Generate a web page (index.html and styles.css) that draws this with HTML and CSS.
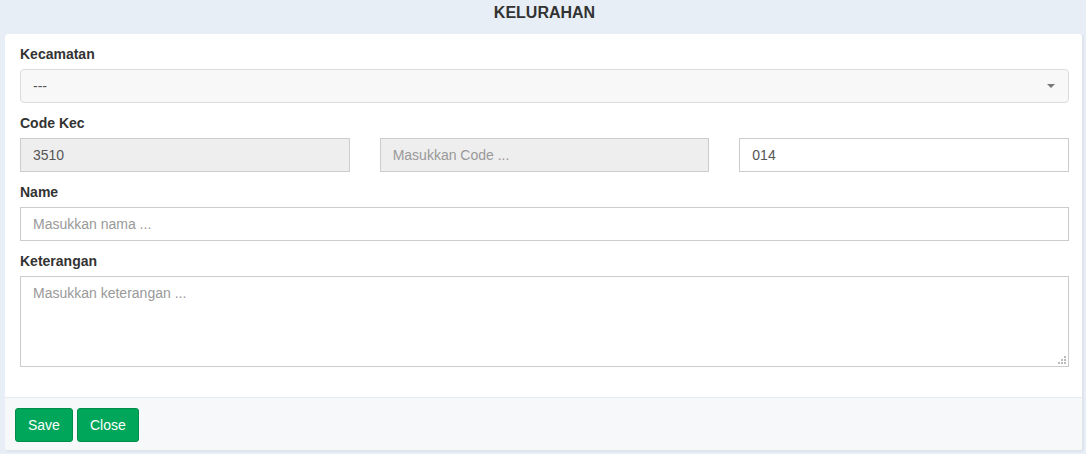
FILE: index.html
```html
<!DOCTYPE html>
<html>
<head>
<meta charset="utf-8">
<link rel="stylesheet" href="styles.css">
</head>
<body>
<div class="page">
  <h1 class="title">KELURAHAN</h1>
  <div class="card">
    <div class="card-body">
      <div class="group">
        <label class="label">Kecamatan</label>
        <div class="select">
          <span class="select-text">---</span>
          <span class="caret"></span>
        </div>
      </div>
      <div class="group">
        <label class="label">Code Kec</label>
        <div class="row3">
          <input class="input" type="text" value="3510" disabled>
          <input class="input" type="text" placeholder="Masukkan Code ..." disabled>
          <input class="input" type="text" value="014">
        </div>
      </div>
      <div class="group">
        <label class="label">Name</label>
        <input class="input" type="text" placeholder="Masukkan nama ...">
      </div>
      <div class="group">
        <label class="label">Keterangan</label>
        <div class="textarea-wrap">
          <textarea class="input textarea" placeholder="Masukkan keterangan ..."></textarea>
          <svg class="grip" width="9" height="9" viewBox="0 0 9 9">
            <rect x="7" y="1" width="2" height="2" fill="#bbb"/>
            <rect x="4" y="4" width="2" height="2" fill="#bbb"/>
            <rect x="7" y="4" width="2" height="2" fill="#bbb"/>
            <rect x="1" y="7" width="2" height="2" fill="#bbb"/>
            <rect x="4" y="7" width="2" height="2" fill="#bbb"/>
            <rect x="7" y="7" width="2" height="2" fill="#bbb"/>
          </svg>
        </div>
      </div>
    </div>
    <div class="card-footer">
      <button class="btn">Save</button>
      <button class="btn">Close</button>
    </div>
  </div>
</div>
</body>
</html>
```

FILE: styles.css
```css
* { box-sizing: border-box; }
html, body {
  margin: 0;
  padding: 0;
  background: #e8eef5;
  font-family: "Liberation Sans", Arial, sans-serif;
  color: #333;
}
.page {
  padding: 0 2px 0 5px;
}
.title {
  margin: 0;
  height: 34px;
  padding-top: 4px;
  font-size: 16px;
  line-height: 18px;
  font-weight: bold;
  text-align: center;
  color: #333;
}
.card {
  background: #fff;
  border-radius: 4px;
  border-right: 2px solid #dfe5ec;
  border-bottom: 2px solid #dfe5ec;
  overflow: hidden;
}
.card-body {
  padding: 11px 13px 30px 15px;
}
.group {
  margin-bottom: 11px;
}
.group:last-child { margin-bottom: 0; }
.label {
  display: block;
  font-size: 14px;
  line-height: 19px;
  font-weight: bold;
  margin-bottom: 5px;
  color: #333;
}
.select {
  display: flex;
  align-items: center;
  justify-content: space-between;
  height: 34px;
  padding: 0 12px;
  border: 1px solid #dcdcdc;
  border-radius: 4px;
  background: #f8f8f8;
  font-size: 14px;
  color: #555;
}
.caret {
  width: 0;
  height: 0;
  border-left: 4px solid transparent;
  border-right: 4px solid transparent;
  border-top: 4px solid #777;
  margin-right: 1px;
}
.row3 {
  display: grid;
  grid-template-columns: 1fr 1fr 1fr;
  column-gap: 30px;
}
.input {
  display: block;
  width: 100%;
  height: 34px;
  padding: 6px 12px;
  border: 1px solid #ccc;
  border-radius: 0;
  background: #fff;
  font-family: "Liberation Sans", Arial, sans-serif;
  font-size: 14px;
  color: #555;
  outline: none;
}
.input:disabled {
  background: #eee;
  color: #555;
  -webkit-text-fill-color: #555;
  opacity: 1;
}
.input::placeholder {
  color: #999;
  -webkit-text-fill-color: #999;
  opacity: 1;
}
.textarea-wrap {
  position: relative;
}
.textarea {
  height: 91px;
  resize: none;
  line-height: 20px;
  padding-top: 6px;
}
.grip {
  position: absolute;
  right: 3px;
  bottom: 3px;
}
.card-footer {
  border-top: 1px solid #e6e9ee;
  background: #f7f8fa;
  padding: 10px 10px 8px;
  display: flex;
  gap: 4px;
}
.btn {
  height: 34px;
  padding: 6px 12px;
  border: 1px solid #008d4c;
  border-radius: 3px;
  background: #00a65a;
  color: #fff;
  font-family: "Liberation Sans", Arial, sans-serif;
  font-size: 14px;
  line-height: 20px;
  cursor: pointer;
}
```
